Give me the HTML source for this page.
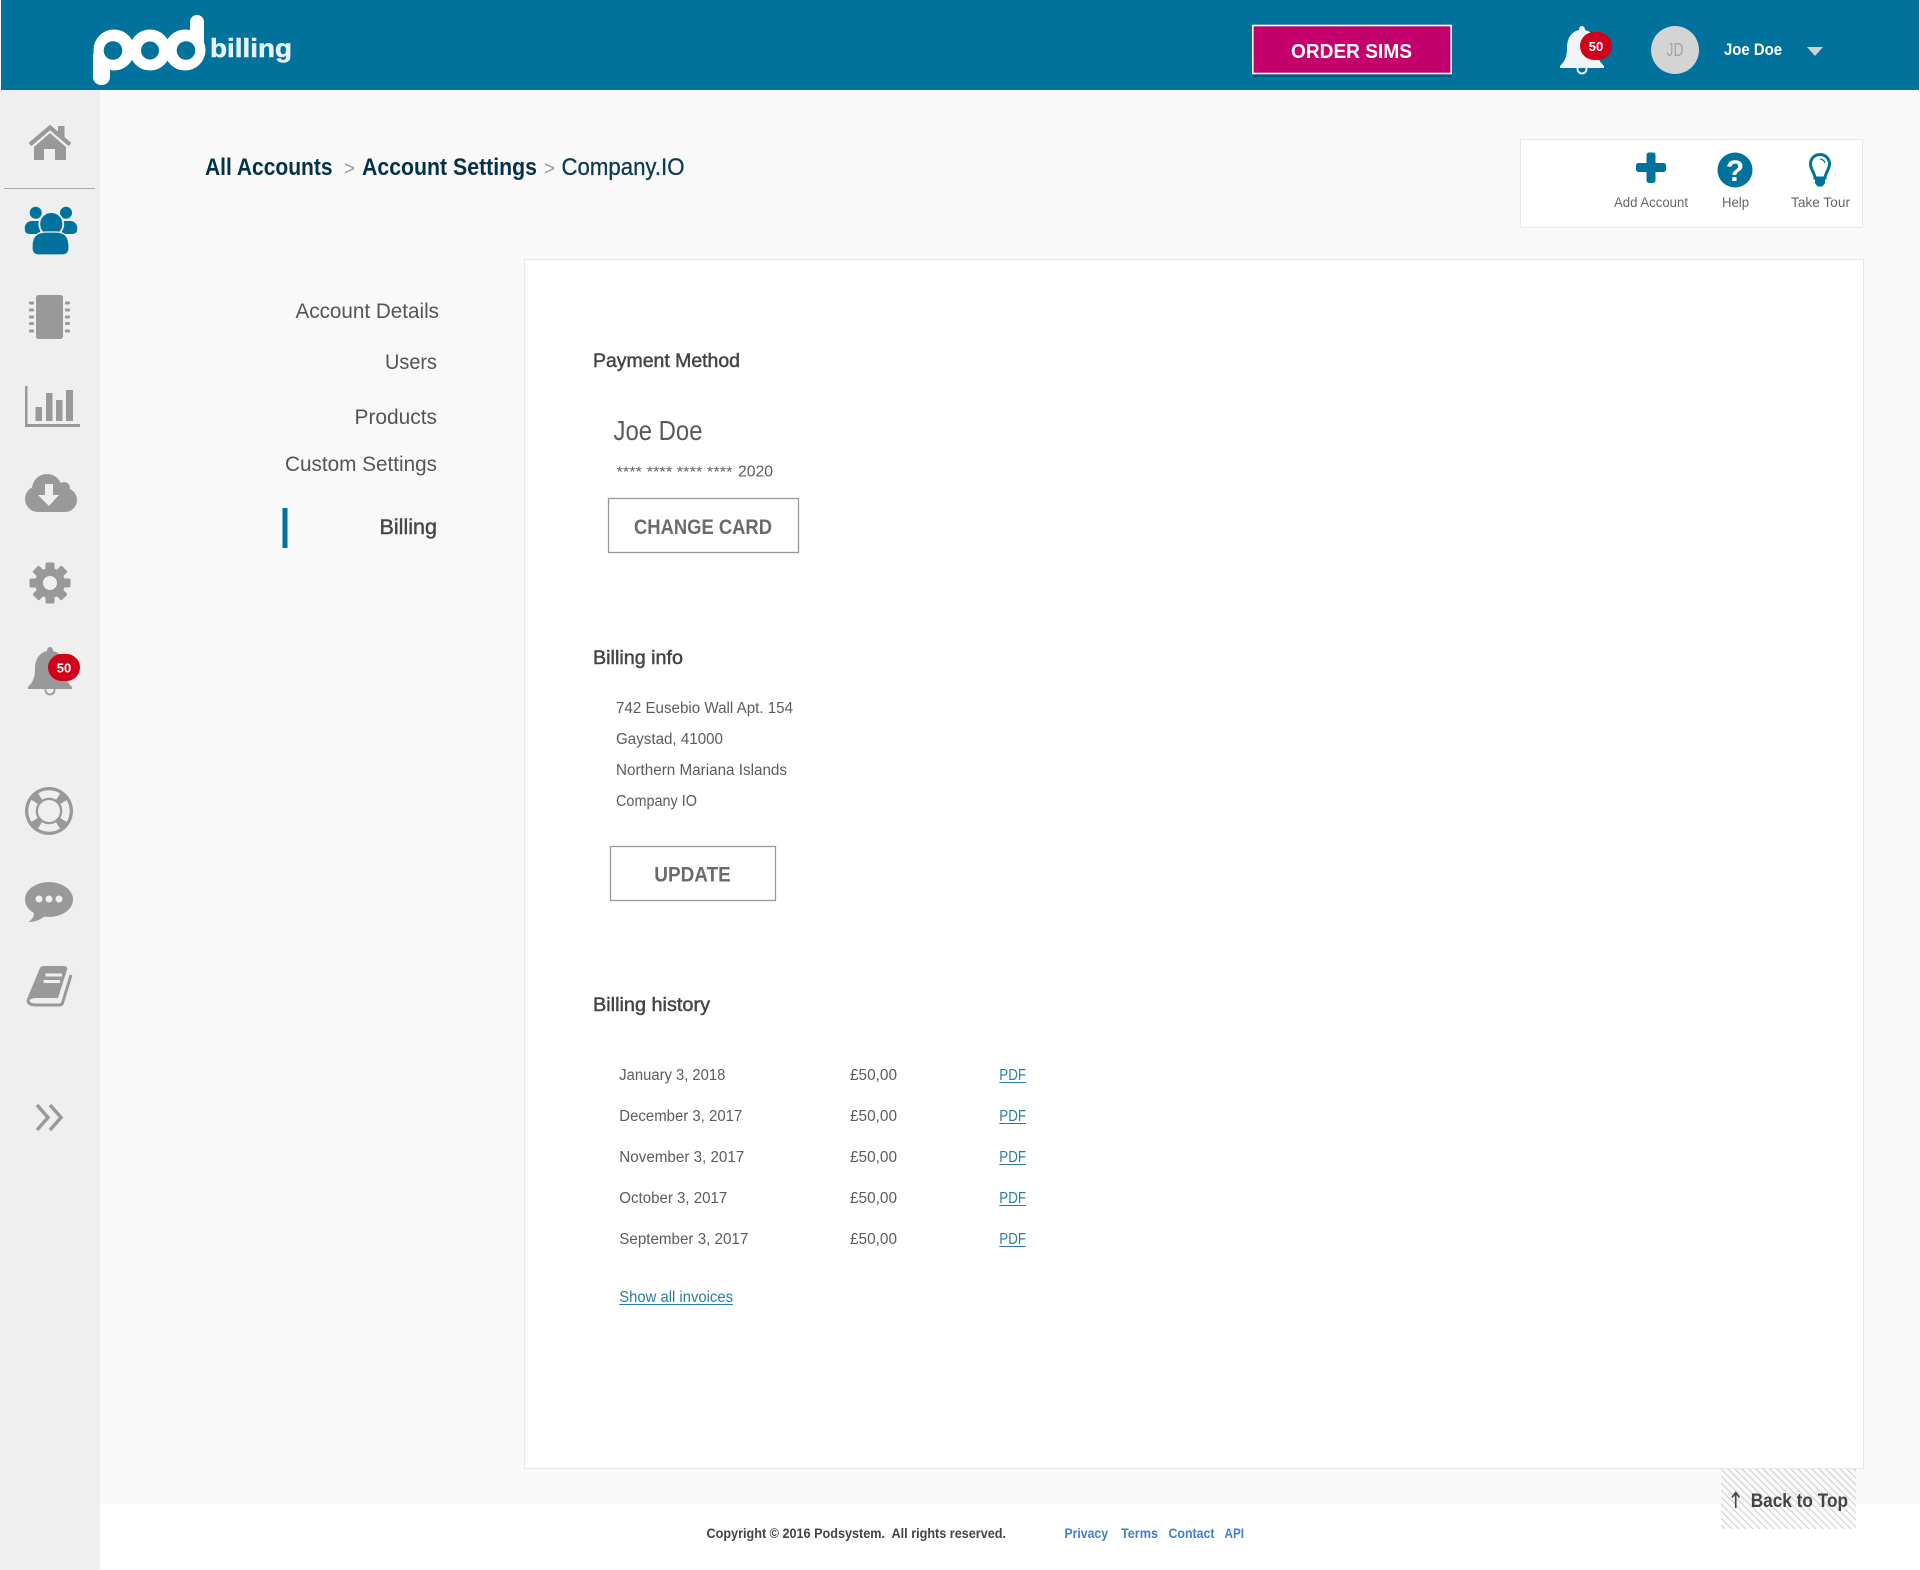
<!DOCTYPE html>
<html lang="en"><head><meta charset="utf-8"><title>Pod Billing</title>
<style>
html,body{margin:0;padding:0;background:#f9f9f9;width:1920px;height:1570px;overflow:hidden}
svg{position:absolute;left:0;top:0;display:block}
text{font-family:"Liberation Sans",sans-serif;white-space:pre}
.b{font-weight:700}
.nav{font-size:21px;fill:#555}
.h{font-size:19px;fill:#444;stroke:#444;stroke-width:.45px}
.t{font-size:15.5px;fill:#5c5c5c}
.l{font-size:15.5px;fill:#2a7f9f}
.btn{font-size:21px;font-weight:700;fill:#6b6b6b}
.f{font-size:13.5px;font-weight:700;fill:#3f7fc8}
.lab{font-size:14px;fill:#666}
</style></head><body>
<svg width="1920" height="1570" viewBox="0 0 1920 1570" xmlns="http://www.w3.org/2000/svg">
<defs>
<pattern id="hatch" width="7" height="7" patternUnits="userSpaceOnUse">
<path d="M-1 -1L8 8M-8 -1L1 8M6 -1L15 8" stroke="#cfcfcf" stroke-width="1.1" fill="none"/>
</pattern>
</defs>
<rect width="1920" height="1570" fill="#f9f9f9"/>
<rect x="100" y="1504" width="1820" height="66" fill="#fff"/>
<rect x="0" y="90" width="100" height="1480" fill="#efefef"/>
<rect x="0" y="0" width="1920" height="90" fill="#fff"/>
<rect x="1" y="0" width="1918" height="90" fill="#00729c"/>

<!-- logo -->
<g fill="#fff">
<circle cx="114" cy="50" r="20.500"/><circle cx="150" cy="50" r="20.500"/><circle cx="185" cy="50" r="20.500"/>
<rect x="93" y="48" width="17" height="37" rx="8"/>
<rect x="190" y="15" width="14" height="45" rx="7"/>
</g>
<g fill="#00729c">
<circle cx="113" cy="50.500" r="9.300"/><circle cx="150" cy="50.500" r="9"/><circle cx="186" cy="50.500" r="9.300"/>
</g>
<text x="210" y="57" class="b" font-size="26" textLength="82" lengthAdjust="spacingAndGlyphs" style="fill:#e6f1f5;stroke:#e6f1f5;stroke-width:.5px">billing</text>

<!-- order sims -->
<rect x="1252" y="25" width="200" height="50" fill="#000" opacity=".18" transform="translate(0 2)"/>
<rect x="1252.800" y="25.500" width="198.400" height="48" fill="#c4006c" stroke="#fff" stroke-width="1.600"/>
<text x="1291" y="58" class="b" font-size="20.500" fill="#fff" textLength="121" lengthAdjust="spacingAndGlyphs">ORDER SIMS</text>

<!-- header bell -->
<g transform="translate(1560 26)">
<circle cx="22" cy="43" r="4.500" fill="none" stroke="#fff" stroke-width="1.800"/>
<path d="M22 0c2 0 3 2 3 4c9 2 12 10 12 18c0 10 3 14 7 18v2H0v-2c4-4 7-8 7-18c0-8 3-16 12-18c0-2 1-4 3-4z" fill="#f2f4f5"/>
</g>
<rect x="1580" y="32" width="32" height="28" rx="14" fill="#d0021b"/>
<text x="1596" y="51" class="b" font-size="13" fill="#fff" text-anchor="middle">50</text>

<!-- avatar -->
<circle cx="1675" cy="50" r="24" fill="#d4d4d4"/>
<text x="1675" y="56" font-size="18" fill="#a3a3a3" text-anchor="middle" textLength="17" lengthAdjust="spacingAndGlyphs">JD</text>
<text x="1724" y="55" class="b" font-size="17" fill="#fff" textLength="58" lengthAdjust="spacingAndGlyphs">Joe Doe</text>
<path d="M1807 47h16l-8 9z" fill="#c9d3d8"/>

<!-- breadcrumb -->
<text x="205" y="175" class="b" font-size="24" fill="#04314a" textLength="127.500" lengthAdjust="spacingAndGlyphs">All Accounts</text>
<text x="344" y="175" font-size="20" fill="#999" textLength="11" lengthAdjust="spacingAndGlyphs">&gt;</text>
<text x="362" y="175" class="b" font-size="24" fill="#04314a" textLength="175" lengthAdjust="spacingAndGlyphs">Account Settings</text>
<text x="544" y="175" font-size="20" fill="#999" textLength="11" lengthAdjust="spacingAndGlyphs">&gt;</text>
<text x="561.500" y="175" font-size="24" textLength="123" lengthAdjust="spacingAndGlyphs" style="fill:#0d3a50;stroke:#0d3a50;stroke-width:.3px">Company.IO</text>

<!-- action box -->
<rect x="1520.500" y="139.500" width="342" height="88" fill="#fff" stroke="#e8e8e8"/>
<path d="M1646.500 155a2.500 2.500 0 0 1 2.500-2.500h4a2.500 2.500 0 0 1 2.500 2.500v8h8a2.500 2.500 0 0 1 2.500 2.500v4a2.500 2.500 0 0 1-2.500 2.500h-8v8.500a2.500 2.500 0 0 1-2.500 2.500h-4a2.500 2.500 0 0 1-2.500-2.500v-8.500h-8a2.500 2.500 0 0 1-2.500-2.500v-4a2.500 2.500 0 0 1 2.500-2.500h8z" fill="#00729c"/>
<circle cx="1735" cy="170" r="17.500" fill="#00729c"/>
<text x="1735" y="181" class="b" font-size="30" fill="#fff" text-anchor="middle">?</text>
<g>
<path d="M1820 154.500c-5.500 0-9.500 4.200-9.500 9.500c0 5 4 8.500 4.500 14h10c.5-5.500 4.500-9 4.500-14c0-5.300-4-9.500-9.500-9.500z" fill="none" stroke="#00729c" stroke-width="3"/>
<path d="M1815 177h10v6l-2.500 3.500h-5l-2.500-3.500z" fill="#00729c"/>
<path d="M1820 159q4 .5 5 4" fill="none" stroke="#00729c" stroke-width="1.300"/>
</g>
<text x="1614" y="207" class="lab" textLength="74" lengthAdjust="spacingAndGlyphs">Add Account</text>
<text x="1722" y="207" class="lab" textLength="27" lengthAdjust="spacingAndGlyphs">Help</text>
<text x="1791" y="207" class="lab" textLength="59" lengthAdjust="spacingAndGlyphs">Take Tour</text>

<!-- panel -->
<rect x="524.500" y="259.500" width="1339" height="1209" fill="#fff" stroke="#e8e8e8"/>

<!-- side nav -->
<text x="295.500" y="318" class="nav" textLength="143.500" lengthAdjust="spacingAndGlyphs">Account Details</text>
<text x="385" y="369" class="nav" textLength="52" lengthAdjust="spacingAndGlyphs">Users</text>
<text x="354.500" y="424" class="nav" textLength="82.500" lengthAdjust="spacingAndGlyphs">Products</text>
<text x="285" y="471" class="nav" textLength="152" lengthAdjust="spacingAndGlyphs">Custom Settings</text>
<text x="379.500" y="534" class="nav" textLength="57.500" lengthAdjust="spacingAndGlyphs" style="fill:#444;stroke:#444;stroke-width:.4px">Billing</text>
<rect x="282.500" y="508" width="5" height="40" fill="#00729c"/>

<!-- payment -->
<text x="593" y="367" class="h" textLength="147" lengthAdjust="spacingAndGlyphs">Payment Method</text>
<text x="613.500" y="440" font-size="28" fill="#5a5a5a" textLength="89" lengthAdjust="spacingAndGlyphs">Joe Doe</text>
<text x="616.500" y="476.500" font-size="15" fill="#666" textLength="116" lengthAdjust="spacingAndGlyphs">**** **** **** ****</text>
<text x="738" y="476.500" class="t" textLength="35" lengthAdjust="spacingAndGlyphs">2020</text>
<rect x="608.500" y="498.500" width="190" height="54" fill="#fff" stroke="#999" stroke-width="1.300"/>
<text x="634" y="534" class="btn" textLength="138" lengthAdjust="spacingAndGlyphs">CHANGE CARD</text>

<!-- billing info -->
<text x="593" y="664" class="h" textLength="90" lengthAdjust="spacingAndGlyphs">Billing info</text>
<text x="616" y="713" class="t" textLength="177" lengthAdjust="spacingAndGlyphs">742 Eusebio Wall Apt. 154</text>
<text x="616" y="744" class="t" textLength="107" lengthAdjust="spacingAndGlyphs">Gaystad, 41000</text>
<text x="616" y="775" class="t" textLength="171" lengthAdjust="spacingAndGlyphs">Northern Mariana Islands</text>
<text x="616" y="806" class="t" textLength="81" lengthAdjust="spacingAndGlyphs">Company IO</text>
<rect x="610.500" y="846.500" width="165" height="54" fill="#fff" stroke="#999" stroke-width="1.300"/>
<text x="654.300" y="881.500" class="btn" textLength="76.500" lengthAdjust="spacingAndGlyphs">UPDATE</text>

<!-- billing history -->
<text x="593" y="1011" class="h" textLength="117" lengthAdjust="spacingAndGlyphs">Billing history</text>
<text x="619.300" y="1080" class="t" textLength="106" lengthAdjust="spacingAndGlyphs">January 3, 2018</text>
<text x="619.300" y="1121" class="t" textLength="123" lengthAdjust="spacingAndGlyphs">December 3, 2017</text>
<text x="619.300" y="1162" class="t" textLength="125" lengthAdjust="spacingAndGlyphs">November 3, 2017</text>
<text x="619.300" y="1203" class="t" textLength="108" lengthAdjust="spacingAndGlyphs">October 3, 2017</text>
<text x="619.300" y="1244" class="t" textLength="129" lengthAdjust="spacingAndGlyphs">September 3, 2017</text>
<text x="850" y="1080" class="t" textLength="47" lengthAdjust="spacingAndGlyphs">£50,00</text>
<text x="850" y="1121" class="t" textLength="47" lengthAdjust="spacingAndGlyphs">£50,00</text>
<text x="850" y="1162" class="t" textLength="47" lengthAdjust="spacingAndGlyphs">£50,00</text>
<text x="850" y="1203" class="t" textLength="47" lengthAdjust="spacingAndGlyphs">£50,00</text>
<text x="850" y="1244" class="t" textLength="47" lengthAdjust="spacingAndGlyphs">£50,00</text>
<text x="999.300" y="1080" class="l" textLength="26.700" lengthAdjust="spacingAndGlyphs">PDF</text>
<text x="999.300" y="1121" class="l" textLength="26.700" lengthAdjust="spacingAndGlyphs">PDF</text>
<text x="999.300" y="1162" class="l" textLength="26.700" lengthAdjust="spacingAndGlyphs">PDF</text>
<text x="999.300" y="1203" class="l" textLength="26.700" lengthAdjust="spacingAndGlyphs">PDF</text>
<text x="999.300" y="1244" class="l" textLength="26.700" lengthAdjust="spacingAndGlyphs">PDF</text>
<g fill="#2a7f9f">
<rect x="999.300" y="1082" width="26.700" height="1"/><rect x="999.300" y="1123" width="26.700" height="1"/><rect x="999.300" y="1164" width="26.700" height="1"/><rect x="999.300" y="1205" width="26.700" height="1"/><rect x="999.300" y="1246" width="26.700" height="1"/>
<rect x="619.300" y="1304" width="113.700" height="1"/>
</g>
<text x="619.300" y="1302" class="l" textLength="113.700" lengthAdjust="spacingAndGlyphs">Show all invoices</text>

<!-- footer -->
<text x="706.500" y="1538" class="b" font-size="13.500" fill="#444" textLength="299.500" lengthAdjust="spacingAndGlyphs">Copyright © 2016 Podsystem.  All rights reserved.</text>
<text x="1064.500" y="1538" class="f" textLength="43.500" lengthAdjust="spacingAndGlyphs">Privacy</text>
<text x="1121" y="1538" class="f" textLength="37" lengthAdjust="spacingAndGlyphs">Terms</text>
<text x="1168.500" y="1538" class="f" textLength="46" lengthAdjust="spacingAndGlyphs">Contact</text>
<text x="1224.500" y="1538" class="f" textLength="19.500" lengthAdjust="spacingAndGlyphs">API</text>

<!-- back to top -->
<rect x="1721" y="1469" width="135" height="60" fill="url(#hatch)"/>
<path d="M1735.700 1508V1493M1732 1497.500l3.700-5 3.700 5" fill="none" stroke="#444" stroke-width="1.600"/>
<text x="1750.700" y="1507" class="b" font-size="19" fill="#444" textLength="97.300" lengthAdjust="spacingAndGlyphs">Back to Top</text>

<!-- sidebar icons -->
<g fill="#999">
<!-- home -->
<path d="M30 144.500L50 127.500L70 144.500" fill="none" stroke="#999" stroke-width="4.200"/>
<rect x="58" y="126" width="6.500" height="11"/>
<path d="M50 133L66 147V160H55V149H44V160H34V147Z"/>
<!-- chip -->
<rect x="36" y="295" width="27" height="44" rx="2.500"/>
<g>
<rect x="29" y="301.500" width="5" height="3" rx="1"/><rect x="29" y="308.500" width="5" height="3" rx="1"/><rect x="29" y="315.500" width="5" height="3" rx="1"/><rect x="29" y="322" width="5" height="3" rx="1"/><rect x="29" y="329.500" width="5" height="3" rx="1"/>
<rect x="65" y="301.500" width="5" height="3" rx="1"/><rect x="65" y="308.500" width="5" height="3" rx="1"/><rect x="65" y="315.500" width="5" height="3" rx="1"/><rect x="65" y="322" width="5" height="3" rx="1"/><rect x="65" y="329.500" width="5" height="3" rx="1"/>
</g>
<!-- chart -->
<rect x="25" y="386" width="2.500" height="41"/><rect x="25" y="424" width="55" height="3"/>
<rect x="35.500" y="407" width="6.500" height="14"/><rect x="46" y="393" width="6.500" height="28"/><rect x="56" y="400" width="6.500" height="21"/><rect x="66" y="390" width="7" height="31"/>
<!-- cloud -->
<circle cx="38" cy="499" r="13"/><circle cx="47" cy="489" r="15"/><circle cx="64" cy="488" r="6"/><circle cx="65" cy="500" r="12"/><rect x="38" y="492" width="27" height="20"/>
<!-- gear -->
<g><rect x="45.500" y="562.500" width="9" height="41" rx="1.500"/><rect x="45.500" y="562.500" width="9" height="41" rx="1.500" transform="rotate(45 50 583)"/><rect x="45.500" y="562.500" width="9" height="41" rx="1.500" transform="rotate(90 50 583)"/><rect x="45.500" y="562.500" width="9" height="41" rx="1.500" transform="rotate(135 50 583)"/><circle cx="50" cy="583" r="15"/></g>
<!-- lifebuoy -->
<circle cx="49" cy="811" r="24"/>
<!-- chat -->
<ellipse cx="49" cy="899.500" rx="24" ry="17.500"/>
<path d="M34 912C34 917 32 920 28 922C36 922 42 919 46 915Z"/>
<!-- book -->
<path d="M40 968Q41 966 44 966H64Q68 966 67 970L58 998H36Q29 998 28 1003L27 999Z"/>
</g>
<path d="M45 484H53V495H59L49 506L38 495H45Z" fill="#efefef"/>
<circle cx="50" cy="583" r="7" fill="#efefef"/>
<circle cx="49" cy="811" r="17" fill="none" stroke="#efefef" stroke-width="7.400" stroke-dasharray="19 7.700" stroke-dashoffset="9.500"/>
<circle cx="49" cy="811" r="11" fill="#efefef"/>
<circle cx="39" cy="899" r="3.500" fill="#efefef"/><circle cx="49" cy="899" r="3.500" fill="#efefef"/><circle cx="59" cy="899" r="3.500" fill="#efefef"/>
<path d="M45.500 975H62M43.500 981.500H60" stroke="#efefef" stroke-width="3" fill="none"/>
<path d="M71 975L62.500 1003Q62 1005 59 1005H36Q28 1005 28 1000" fill="none" stroke="#999" stroke-width="3"/>
<path d="M37 1105L48 1117.500L37 1130M50 1105L61 1117.500L50 1130" fill="none" stroke="#999" stroke-width="3.500"/>
<rect x="4" y="188" width="91" height="1" fill="#aaa"/>

<!-- users icon -->
<g fill="#00729c">
<circle cx="35.700" cy="212.700" r="6"/><circle cx="66" cy="212.700" r="6"/>
<path d="M25 230a7 7 0 0 1 7-9h8v13h-9q-6 0-6-4z"/><path d="M77 230a7 7 0 0 0-7-9h-8v13h9q6 0 6-4z"/>
<circle cx="51.300" cy="224" r="12" stroke="#efefef" stroke-width="1.800"/>
<path d="M32 246q0-14 14-14h10q13 0 13 14v2q0 7-7 7H39q-7 0-7-7z" stroke="#efefef" stroke-width="1.200"/>
</g>

<!-- sidebar bell -->
<g transform="translate(28 647)">
<circle cx="22" cy="43" r="4.500" fill="none" stroke="#999" stroke-width="1.800"/>
<path d="M22 0c2 0 3 2 3 4c9 2 12 10 12 18c0 10 3 14 7 18v2H0v-2c4-4 7-8 7-18c0-8 3-16 12-18c0-2 1-4 3-4z" fill="#999"/>
</g>
<rect x="48" y="654" width="32" height="27" rx="13.500" fill="#d0021b"/>
<text x="64" y="672.500" class="b" font-size="13" fill="#fff" text-anchor="middle">50</text>
</svg>
</body></html>
